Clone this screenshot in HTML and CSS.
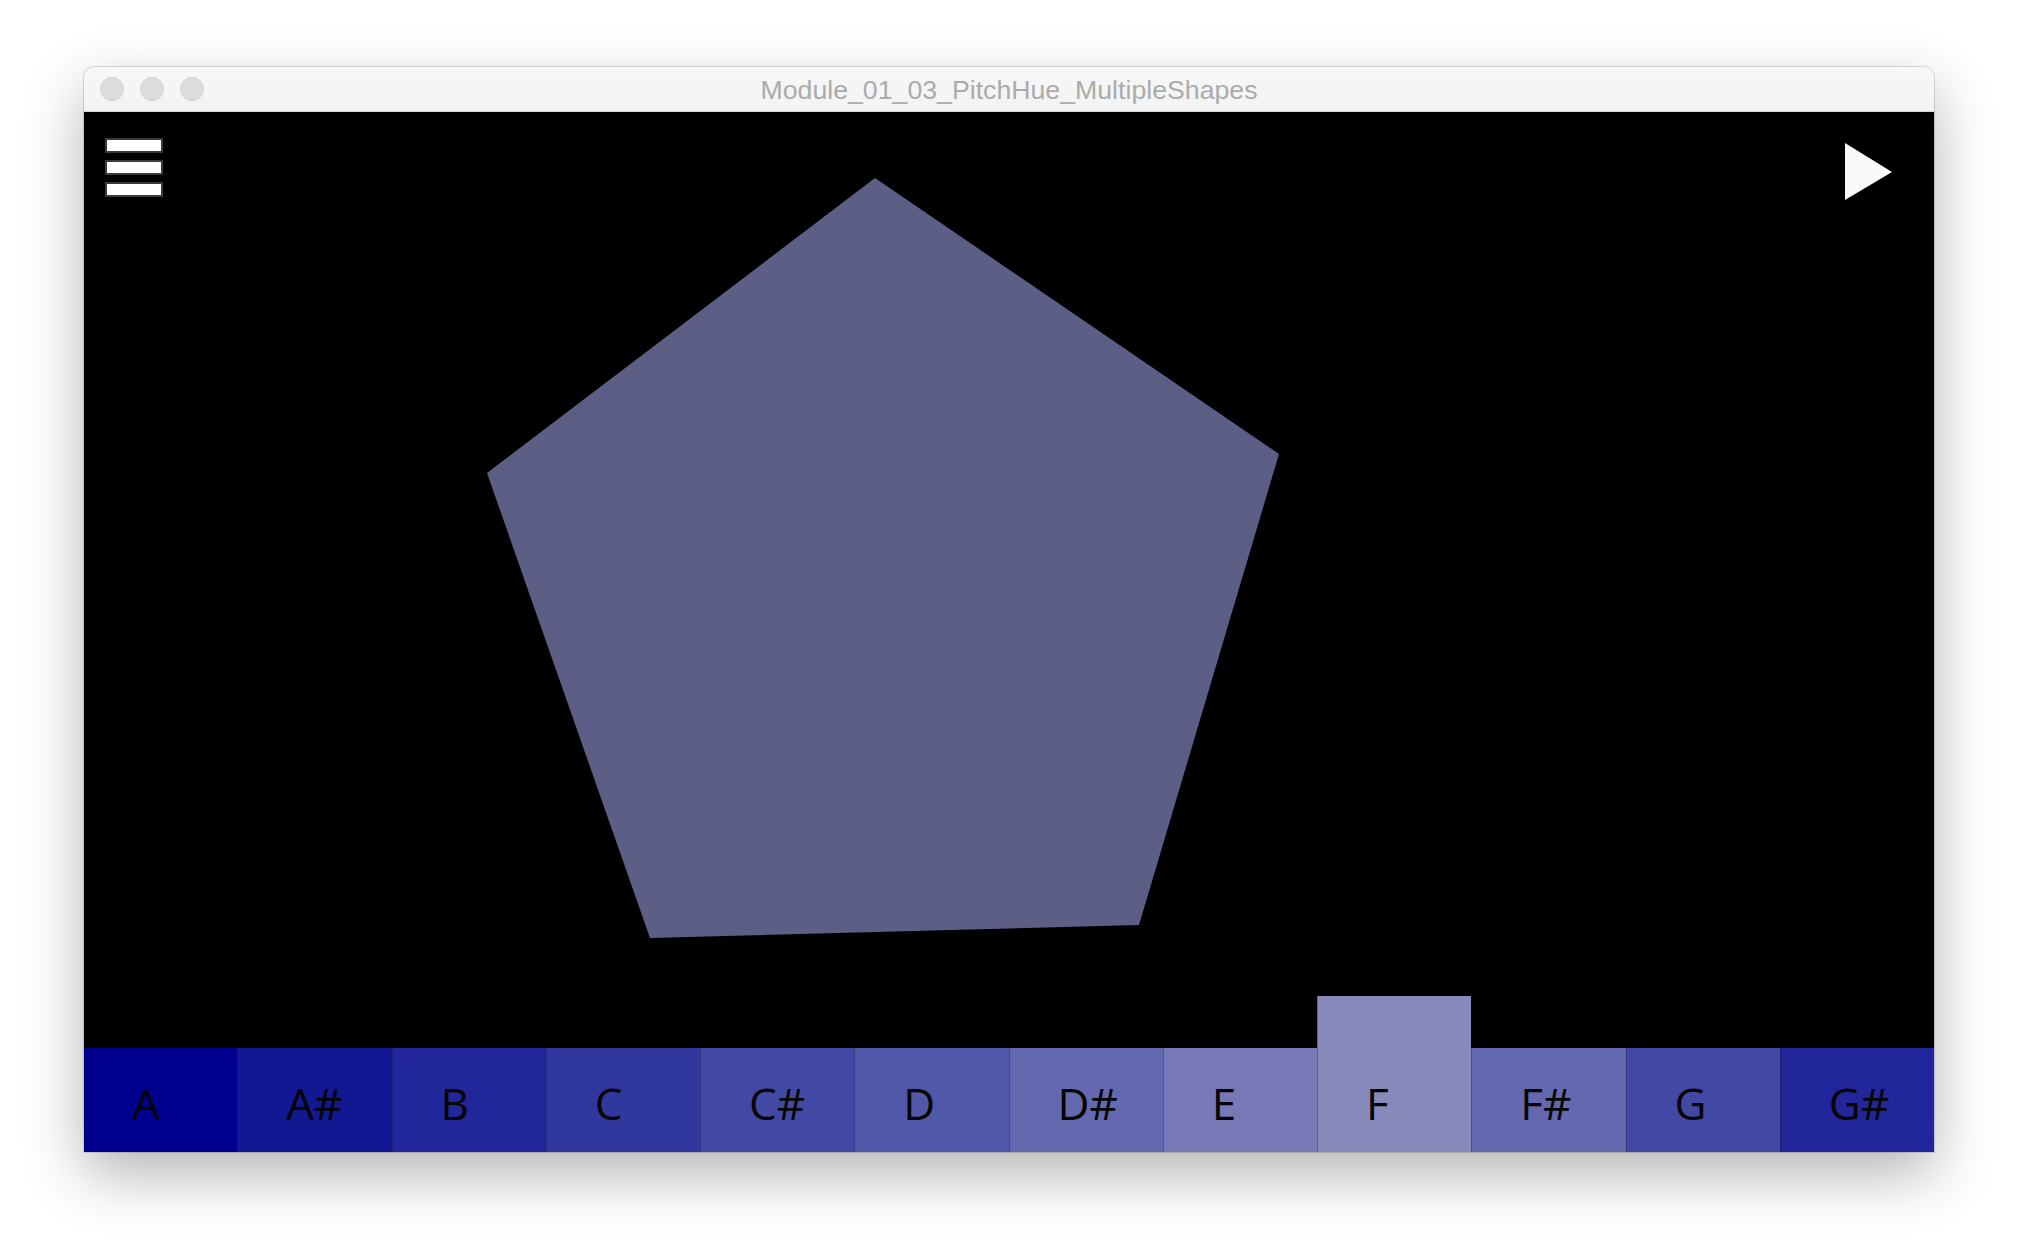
FILE: index.html
```html
<!DOCTYPE html>
<html>
<head>
<meta charset="utf-8">
<title>Module_01_03_PitchHue_MultipleShapes</title>
<link rel="stylesheet" href="styles.css">
</head>
<body>
<div class="window">
  <div class="titlebar">
    <div class="lights">
      <span class="light"></span><span class="light"></span><span class="light"></span>
    </div>
    <div class="title">Module_01_03_PitchHue_MultipleShapes</div>
  </div>
  <div class="content">
    <div class="stage">
      <svg class="canvas" viewBox="0 0 1850 884" width="1850" height="884">
        <polygon points="791,66 1195,342 1055,813 566,826 403,361" fill="#5c5e86"/>
      </svg>
      <div class="menu">
        <span class="bar"></span><span class="bar"></span><span class="bar"></span>
      </div>
      <svg class="play" viewBox="0 0 60 70" width="60" height="70">
        <polygon points="6,6 53,35 6,63" fill="#fafafa"/>
      </svg>
    </div>
    <div class="keys">
      <div class="key k-a"><span class="label">A</span></div>
      <div class="key k-as"><span class="label">A#</span></div>
      <div class="key k-b"><span class="label">B</span></div>
      <div class="key k-c"><span class="label">C</span></div>
      <div class="key k-cs"><span class="label">C#</span></div>
      <div class="key k-d"><span class="label">D</span></div>
      <div class="key k-ds"><span class="label">D#</span></div>
      <div class="key k-e"><span class="label">E</span></div>
      <div class="key k-f active"><span class="label">F</span></div>
      <div class="key k-fs"><span class="label">F#</span></div>
      <div class="key k-g"><span class="label">G</span></div>
      <div class="key k-gs"><span class="label">G#</span></div>
    </div>
  </div>
</div>
</body>
</html>
```

FILE: styles.css
```css
html, body {
  margin: 0;
  padding: 0;
  background: #ffffff;
}
body {
  width: 2018px;
  height: 1252px;
  overflow: hidden;
  padding: 67px 0 0 84px;
  box-sizing: border-box;
}
.window {
  width: 1850px;
  display: flex;
  flex-direction: column;
  border-radius: 10px 10px 0 0;
  box-shadow: 0 22px 60px rgba(0,0,0,0.30), 0 0 0 1px rgba(0,0,0,0.13);
  overflow: hidden;
}
.titlebar {
  height: 44px;
  background: linear-gradient(#f7f7f7, #f3f3f3);
  border-bottom: 1px solid #d6d6d6;
  display: flex;
  align-items: center;
  position: relative;
}
.lights {
  display: flex;
  gap: 16px;
  padding-left: 16px;
}
.light {
  width: 22px;
  height: 22px;
  border-radius: 50%;
  background: #dddddd;
  border: 1px solid #d0d0d0;
}
.title {
  position: absolute;
  left: 0;
  right: 0;
  top: 0;
  bottom: 0;
  display: flex;
  align-items: center;
  justify-content: center;
  font-family: "Liberation Sans", Arial, sans-serif;
  font-size: 26.7px;
  color: #ababab;
  padding-top: 3px;
}
.content {
  background: #000000;
  display: flex;
  flex-direction: column;
}
.stage {
  height: 884px;
  position: relative;
}
.canvas {
  display: block;
}
.menu {
  position: absolute;
  left: 21px;
  top: 26px;
  display: flex;
  flex-direction: column;
  gap: 7px;
}
.bar {
  display: block;
  width: 54px;
  height: 11px;
  background: #ffffff;
  border: 2px solid #3a3a3a;
}
.play {
  position: absolute;
  left: 1755px;
  top: 25px;
}
.keys {
  height: 156px;
  display: flex;
  align-items: flex-end;
}
.key {
  flex: 1;
  height: 104px;
  box-sizing: border-box;
  display: flex;
  align-items: flex-end;
  border-left: 1px solid rgba(20,20,60,0.35);
}
.key.k-a { border-left: none; }
.key.active { height: 156px; }
.label {
  display: block;
  padding-left: 48px;
  padding-bottom: 27px;
  font-family: "Open Sans", "Noto Sans", sans-serif;
  font-size: 44px;
  line-height: 44px;
  color: #050505;
}
.k-a  { background: #00008f; }
.k-as { background: #111891; }
.k-b  { background: #21279a; }
.k-c  { background: #30379d; }
.k-cs { background: #4249a5; }
.k-d  { background: #5158a9; }
.k-ds { background: #6468ae; }
.k-e  { background: #7679b5; }
.k-f  { background: #8789bb; }
.k-fs { background: #6468ae; }
.k-g  { background: #4249a5; }
.k-gs { background: #21279a; }
```
